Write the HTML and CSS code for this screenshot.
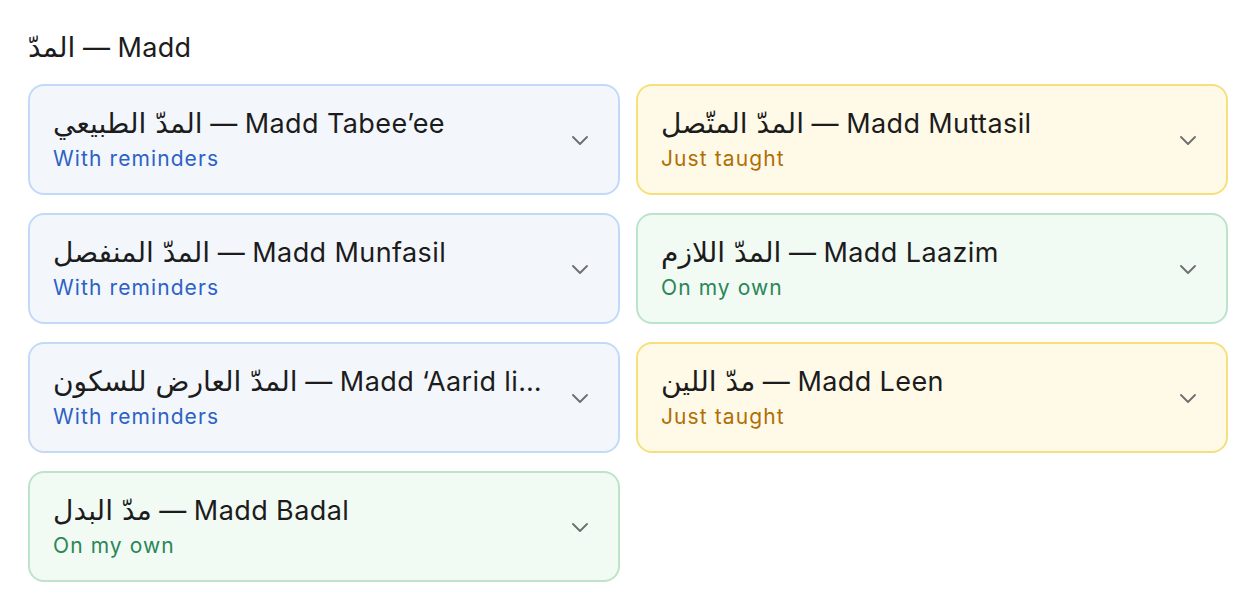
FILE: index.html
```html
<!DOCTYPE html>
<html lang="en">
<head>
    <meta charset="UTF-8">
    <meta name="viewport" content="width=device-width, initial-scale=1.0">
    <title>Madd</title>
    <link rel="stylesheet" href="styles.css">
</head>
<body>
    <section class="rule-group">
        <h2 class="group-title"><span class="ar">المدّ</span> — Madd</h2>

        <div class="rule-grid">
            <button class="rule-card reminders">
                <span class="rule-text">
                    <span class="rule-name"><span class="ar">المدّ الطبيعي</span> — Madd Tabee’ee</span>
                    <span class="rule-level">With reminders</span>
                </span>
                <svg class="chevron" viewBox="0 0 24 24"><path d="M5 9l7 7 7-7"/></svg>
            </button>

            <button class="rule-card taught">
                <span class="rule-text">
                    <span class="rule-name"><span class="ar">المدّ المتّصل</span> — Madd Muttasil</span>
                    <span class="rule-level">Just taught</span>
                </span>
                <svg class="chevron" viewBox="0 0 24 24"><path d="M5 9l7 7 7-7"/></svg>
            </button>

            <button class="rule-card reminders">
                <span class="rule-text">
                    <span class="rule-name"><span class="ar">المدّ المنفصل</span> — Madd Munfasil</span>
                    <span class="rule-level">With reminders</span>
                </span>
                <svg class="chevron" viewBox="0 0 24 24"><path d="M5 9l7 7 7-7"/></svg>
            </button>

            <button class="rule-card own">
                <span class="rule-text">
                    <span class="rule-name"><span class="ar">المدّ اللازم</span> — Madd Laazim</span>
                    <span class="rule-level">On my own</span>
                </span>
                <svg class="chevron" viewBox="0 0 24 24"><path d="M5 9l7 7 7-7"/></svg>
            </button>

            <button class="rule-card reminders">
                <span class="rule-text">
                    <span class="rule-name"><span class="ar">المدّ العارض للسكون</span> — Madd ‘Aarid lis-Sukoon</span>
                    <span class="rule-level">With reminders</span>
                </span>
                <svg class="chevron" viewBox="0 0 24 24"><path d="M5 9l7 7 7-7"/></svg>
            </button>

            <button class="rule-card taught">
                <span class="rule-text">
                    <span class="rule-name"><span class="ar">مدّ اللين</span> — Madd Leen</span>
                    <span class="rule-level">Just taught</span>
                </span>
                <svg class="chevron" viewBox="0 0 24 24"><path d="M5 9l7 7 7-7"/></svg>
            </button>

            <button class="rule-card own">
                <span class="rule-text">
                    <span class="rule-name"><span class="ar">مدّ البدل</span> — Madd Badal</span>
                    <span class="rule-level">On my own</span>
                </span>
                <svg class="chevron" viewBox="0 0 24 24"><path d="M5 9l7 7 7-7"/></svg>
            </button>
        </div>
    </section>
</body>
</html>
```

FILE: styles.css
```css
body {
    margin: 0;
    padding: 28px 28px;
    background: #ffffff;
    font-family: "Inter", "Noto Sans", "DejaVu Sans", sans-serif;
    color: #1c1c1c;
}

.ar {
    font-family: "DejaVu Sans", sans-serif;
    font-size: 1.04em;
    letter-spacing: 0;
}

.group-title {
    margin: 4px 0 20px;
    height: 32px;
    font-size: 27px;
    font-weight: 400;
    line-height: 32px;
    letter-spacing: 0.3px;
}

.rule-grid {
    display: grid;
    grid-template-columns: 1fr 1fr;
    gap: 18px 16px;
}

.rule-card {
    display: flex;
    align-items: center;
    gap: 12px;
    min-width: 0;
    padding: 21px 26px 20px 23px;
    border: 2px solid;
    border-radius: 16px;
    font: inherit;
    color: inherit;
    text-align: left;
    cursor: pointer;
}

.rule-text {
    display: flex;
    flex-direction: column;
    gap: 4px;
    flex: 1;
    min-width: 0;
}

.rule-name {
    height: 34px;
    font-size: 27px;
    line-height: 34px;
    letter-spacing: 0.4px;
    white-space: nowrap;
    overflow: hidden;
    text-overflow: ellipsis;
}

.rule-level {
    font-size: 21px;
    line-height: 28px;
    letter-spacing: 1.1px;
}

.chevron {
    width: 24px;
    height: 24px;
    flex-shrink: 0;
    fill: none;
    stroke: #6f6f6f;
    stroke-width: 1.9;
    stroke-linecap: round;
    stroke-linejoin: round;
}

.rule-card.reminders {
    background: #f3f7fc;
    border-color: #c3daf7;
}

.rule-card.reminders .rule-level {
    color: #2c61c5;
}

.rule-card.taught {
    background: #fffae8;
    border-color: #f6e07e;
}

.rule-card.taught .rule-level {
    color: #b06e05;
}

.rule-card.own {
    background: #f2faf4;
    border-color: #bde3cb;
}

.rule-card.own .rule-level {
    color: #2a8659;
}
```
